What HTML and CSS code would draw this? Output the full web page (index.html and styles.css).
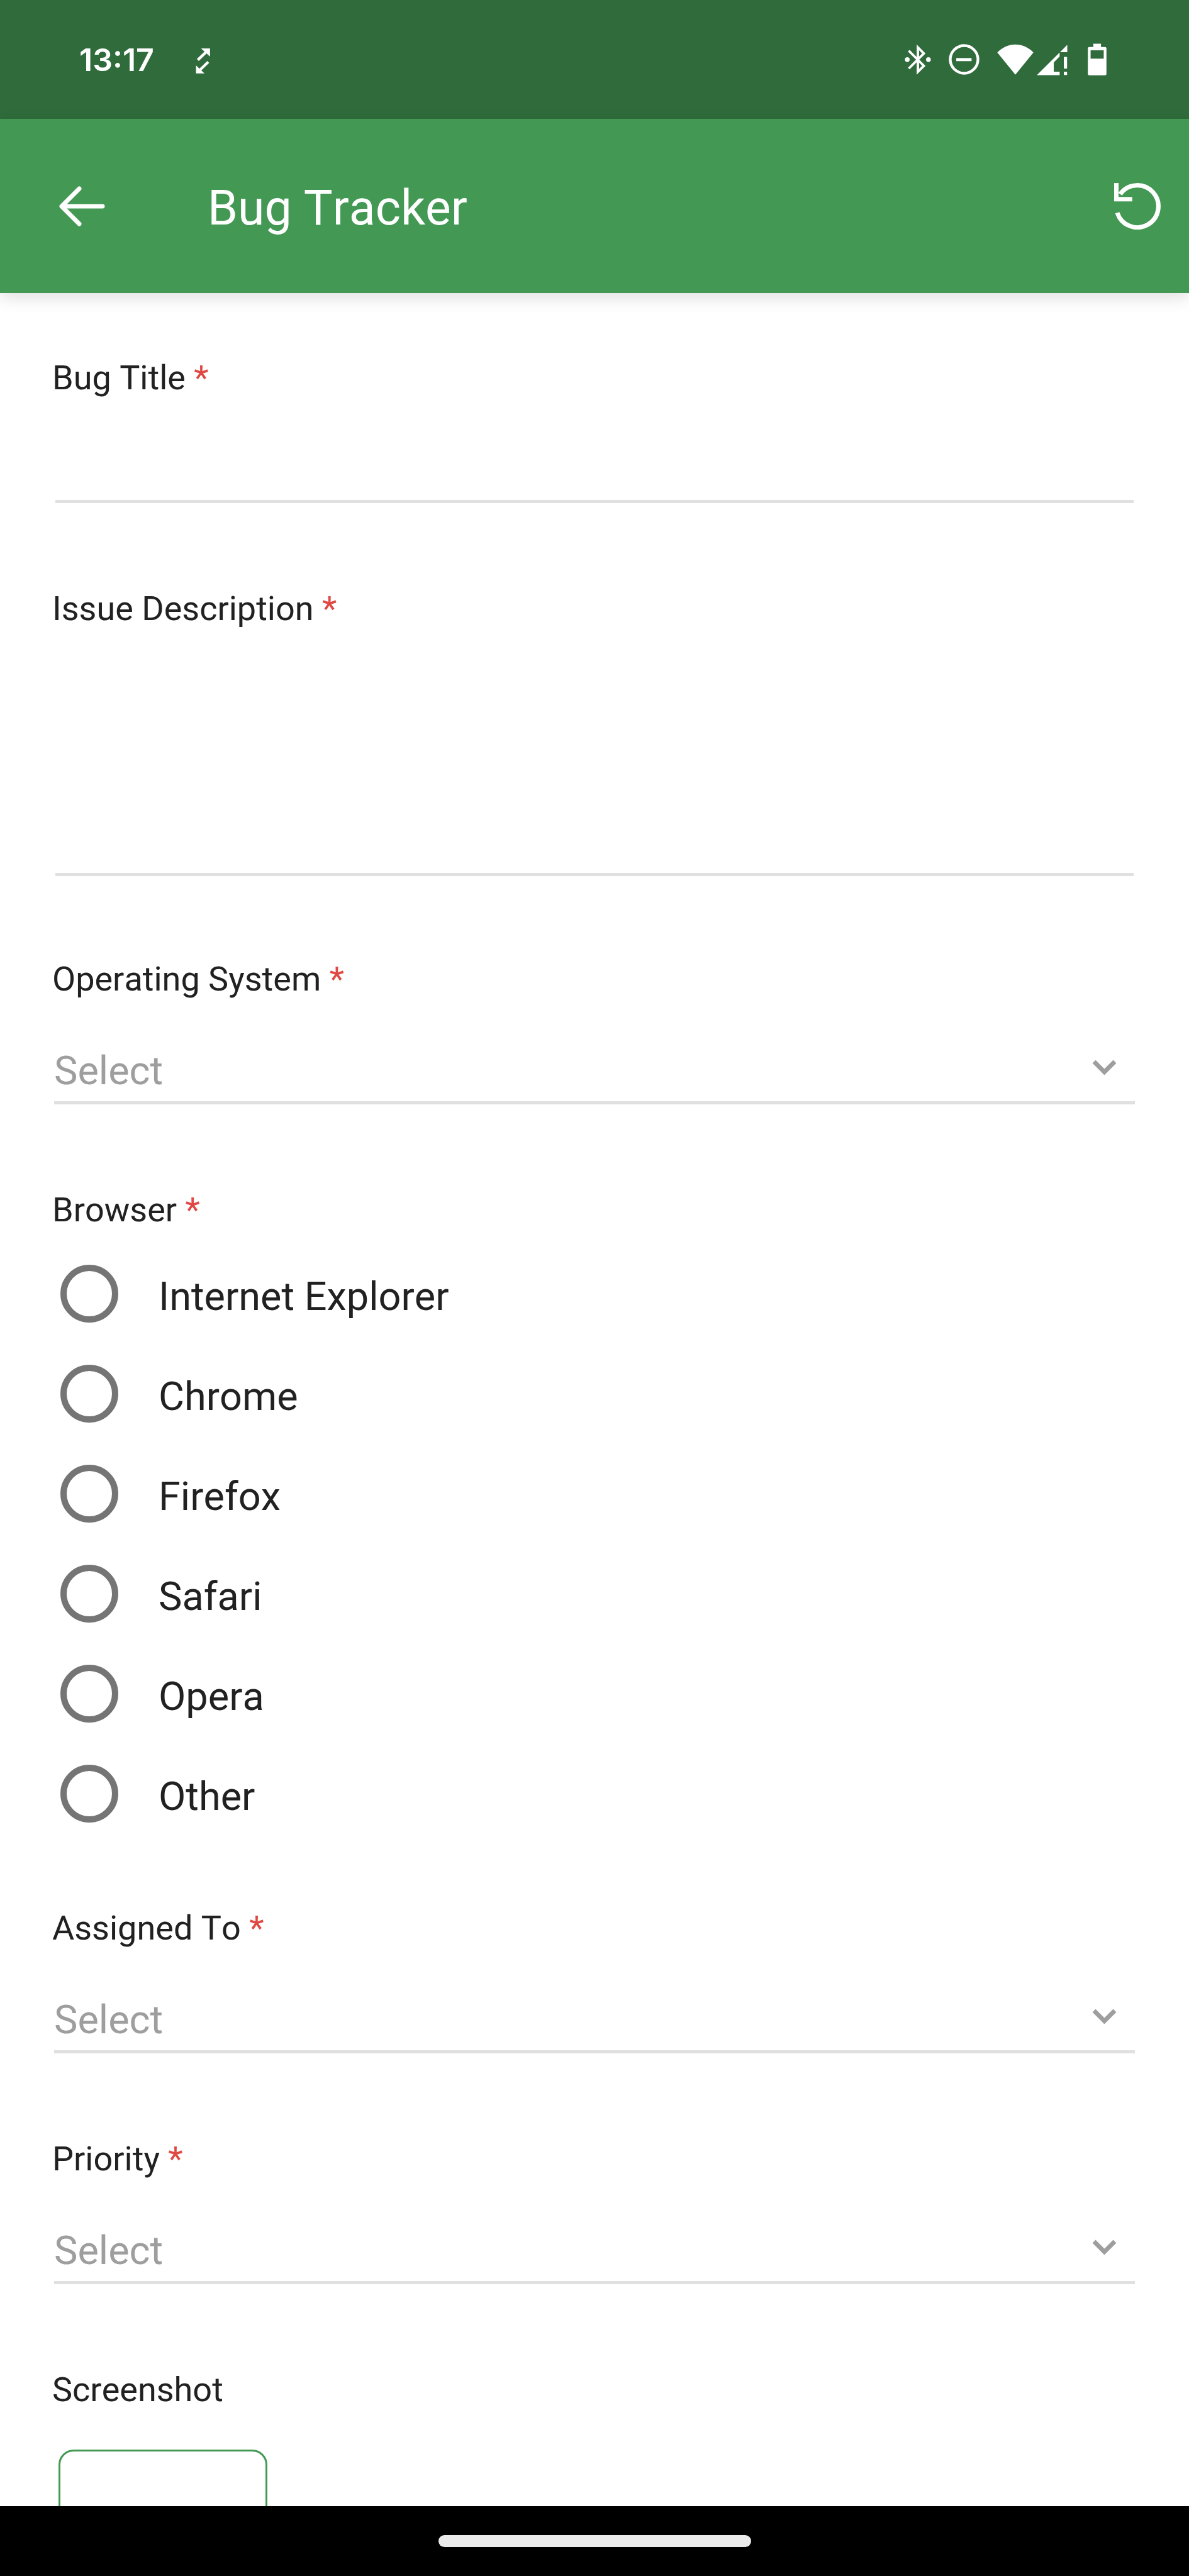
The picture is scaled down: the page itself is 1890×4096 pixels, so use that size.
FILE: index.html
```
<!DOCTYPE html>
<html lang="en">
<head>
    <meta charset="UTF-8">
    <meta name="viewport" content="width=device-width, initial-scale=1.0">
    <title>Bug Tracker</title>
    <link rel="stylesheet" href="styles.css">
</head>
<body>

<div class="status-bar">
    <span class="clock">13:17</span>
    <svg width="24" height="51" viewBox="0 0 84 176" fill="currentColor" stroke="currentColor">
        <path d="M30 27H80V72Z M2 166H49L2 121Z" stroke="none"/>
        <path d="M12 91L62 43 M70 102L20 150" stroke-width="15"/>
    </svg>
    <div class="status-icons">
        <!-- bluetooth -->
        <svg width="42" height="51" viewBox="0 0 144 176" fill="none" stroke="currentColor" stroke-width="13">
            <path d="M22 40L105 123L72 156V22L105 55L22 138" stroke-miterlimit="10"/>
            <circle cx="14" cy="89" r="13" fill="currentColor" stroke="none"/>
            <circle cx="130" cy="89" r="13" fill="currentColor" stroke="none"/>
        </svg>
        <!-- do not disturb -->
        <svg width="49" height="51" viewBox="0 0 168 176" fill="none" stroke="currentColor">
            <circle cx="84" cy="88" r="76" stroke-width="15"/>
            <path d="M41 89H125" stroke-width="17"/>
        </svg>
        <div class="network">
            <svg width="58" height="51" viewBox="0 0 198 176" fill="currentColor">
                <path d="M99 172L0 50C28 22 60 6 99 6S170 22 198 50Z"/>
            </svg>
            <svg width="53" height="51" viewBox="0 0 182 176" fill="currentColor">
                <path d="M0 174L125 50V72L93 104V155H125V174Z M167 8V48H127Z M148 74H166V138H148Z M148 155H166V173H148Z"/>
            </svg>
        </div>
        <!-- battery -->
        <svg width="30" height="51" viewBox="0 0 102 176" fill="currentColor">
            <path fill-rule="evenodd" d="M30 2H72V20H94Q102 20 102 28V167Q102 175 94 175H8Q0 175 0 167V28Q0 20 8 20H30Z M15 38V84H87V38Z"/>
        </svg>
    </div>
</div>

<header class="app-bar">
    <button type="button" class="icon-btn" aria-label="Back">
        <svg width="74" height="64" viewBox="0 0 74 64" fill="none" stroke="currentColor" stroke-width="7" stroke-linecap="round" stroke-linejoin="round">
            <path d="M33 4L5 32L33 60M6 32H70"/>
        </svg>
    </button>
    <h1>Bug Tracker</h1>
    <button type="reset" form="bug-form" class="icon-btn" aria-label="Reset">
        <svg width="74" height="74" viewBox="0 0 252 252" fill="none" stroke="currentColor" stroke-width="24">
            <path d="M17 161A114 114 0 1 0 33 60"/>
            <path d="M12 0V88H98"/>
        </svg>
    </button>
</header>

<form id="bug-form" class="form">
    <div class="field">
        <label class="field-label" for="title">Bug Title <span class="required">*</span></label>
        <input type="text" id="title" class="text-control">
    </div>

    <div class="field field-long">
        <label class="field-label" for="description">Issue Description <span class="required">*</span></label>
        <textarea id="description" class="text-control"></textarea>
    </div>

    <div class="field">
        <label class="field-label" for="os">Operating System <span class="required">*</span></label>
        <div class="select-wrap">
            <select id="os"><option>Select</option></select>
            <svg class="chevron" width="39" height="25" viewBox="0 0 39 25" fill="none" stroke="currentColor" stroke-width="7"><path d="M3 3L19.5 19.5L36 3"/></svg>
        </div>
    </div>

    <fieldset class="field field-radios">
        <legend class="field-label">Browser <span class="required">*</span></legend>
        <div class="radio-list">
            <label class="radio"><input type="radio" name="browser"><span>Internet Explorer</span></label>
            <label class="radio"><input type="radio" name="browser"><span>Chrome</span></label>
            <label class="radio"><input type="radio" name="browser"><span>Firefox</span></label>
            <label class="radio"><input type="radio" name="browser"><span>Safari</span></label>
            <label class="radio"><input type="radio" name="browser"><span>Opera</span></label>
            <label class="radio"><input type="radio" name="browser"><span>Other</span></label>
        </div>
    </fieldset>

    <div class="field">
        <label class="field-label" for="assigned">Assigned To <span class="required">*</span></label>
        <div class="select-wrap">
            <select id="assigned"><option>Select</option></select>
            <svg class="chevron" width="39" height="25" viewBox="0 0 39 25" fill="none" stroke="currentColor" stroke-width="7"><path d="M3 3L19.5 19.5L36 3"/></svg>
        </div>
    </div>

    <div class="field">
        <label class="field-label" for="priority">Priority <span class="required">*</span></label>
        <div class="select-wrap">
            <select id="priority"><option>Select</option></select>
            <svg class="chevron" width="39" height="25" viewBox="0 0 39 25" fill="none" stroke="currentColor" stroke-width="7"><path d="M3 3L19.5 19.5L36 3"/></svg>
        </div>
    </div>

    <div class="field">
        <label class="field-label" for="screenshot">Screenshot</label>
        <button type="button" id="screenshot" class="upload-btn"></button>
    </div>
</form>

<div class="nav-bar">
    <div class="nav-handle"></div>
</div>

</body>
</html>
```
FILE: styles.css
```
:root {
    --primary-color: #439853;
    --primary-dark: #2f6b3b;
    --text-color: #212121;
    --hint-color: #9e9e9e;
    --line-color: #e0e0e0;
    --radio-color: #757575;
    --required-color: #e04843;
}
* { box-sizing: border-box; }
body {
    font-family: Roboto, "Liberation Sans", sans-serif;
    font-kerning: none;
    margin: 0;
    height: 100vh;
    display: flex;
    flex-direction: column;
    background-color: #fff;
    color: var(--text-color);
}
svg { display: block; flex: none; }

.status-bar {
    flex: none;
    height: 189px;
    padding: 0 131px 0 126px;
    display: flex;
    align-items: center;
    background-color: var(--primary-dark);
    color: #fff;
}
.clock {
    font-family: Inter, Roboto, sans-serif;
    font-size: 50px;
    font-weight: 600;
    font-kerning: normal;
    margin-right: 66px;
}
.status-icons {
    margin-left: auto;
    display: flex;
    align-items: center;
    gap: 28px;
}
.network { display: flex; gap: 5px; }

.app-bar {
    flex: none;
    height: 277px;
    padding: 0 45px 0 93px;
    display: flex;
    align-items: center;
    background-color: var(--primary-color);
    color: #fff;
    position: relative;
    z-index: 1;
    box-shadow: 0 8px 24px rgba(0, 0, 0, 0.12);
}
.app-bar h1 {
    flex: 1;
    margin: 0 0 0 163px;
    padding-top: 6px;
    font-size: 77px;
    font-weight: 400;
}
.icon-btn {
    padding: 0;
    border: none;
    background: none;
    color: inherit;
    cursor: pointer;
}

.form {
    flex: 1;
    min-height: 0;
    overflow: hidden;
    padding: 103px 83px 0;
}
.field {
    margin: 0 0 136px;
    padding: 0;
    border: none;
    display: flow-root;
}
.field-long { margin-bottom: 132px; }
.field-radios { margin-bottom: 103px; }
.field-label {
    display: block;
    padding: 0;
    font-size: 54px;
    line-height: 64px;
}
.required { color: var(--required-color); }

.text-control {
    display: block;
    width: calc(100% - 10px);
    height: 167px;
    margin: 0 5px;
    padding: 60px 0 0;
    border: none;
    border-bottom: 5px solid var(--line-color);
    background: none;
    font: inherit;
    font-size: 63px;
    color: inherit;
    outline: none;
    resize: none;
}
textarea.text-control { height: 393px; }

.select-wrap {
    display: grid;
    margin: 0 3px;
    color: var(--hint-color);
}
.select-wrap select {
    grid-area: 1 / 1;
    width: 100%;
    height: 167px;
    padding: 65px 0 0;
    border: none;
    border-bottom: 5px solid var(--line-color);
    border-radius: 0;
    background: none;
    appearance: none;
    font: inherit;
    font-size: 63px;
    color: inherit;
    outline: none;
}
.chevron {
    grid-area: 1 / 1;
    justify-self: end;
    align-self: end;
    margin: 0 29px 46px 0;
    pointer-events: none;
}

.radio-list { padding: 21px 0 0 13px; }
.radio {
    display: flex;
    align-items: center;
    gap: 64px;
    height: 159px;
    font-size: 63px;
}
.radio span { padding-top: 9px; }
.radio input {
    appearance: none;
    width: 92px;
    height: 92px;
    margin: 0;
    border: 10px solid var(--radio-color);
    border-radius: 50%;
}
.radio input:checked {
    border-color: var(--primary-color);
    background: radial-gradient(var(--primary-color) 50%, transparent 52%);
}

.upload-btn {
    display: block;
    width: 332px;
    height: 332px;
    margin: 63px 10px 0;
    border: 3px solid var(--primary-color);
    border-radius: 24px;
    background: none;
}

.nav-bar {
    flex: none;
    height: 111px;
    display: flex;
    align-items: center;
    justify-content: center;
    background-color: #000;
}
.nav-handle {
    width: 497px;
    height: 19px;
    border-radius: 10px;
    background-color: #ebebeb;
}
```
